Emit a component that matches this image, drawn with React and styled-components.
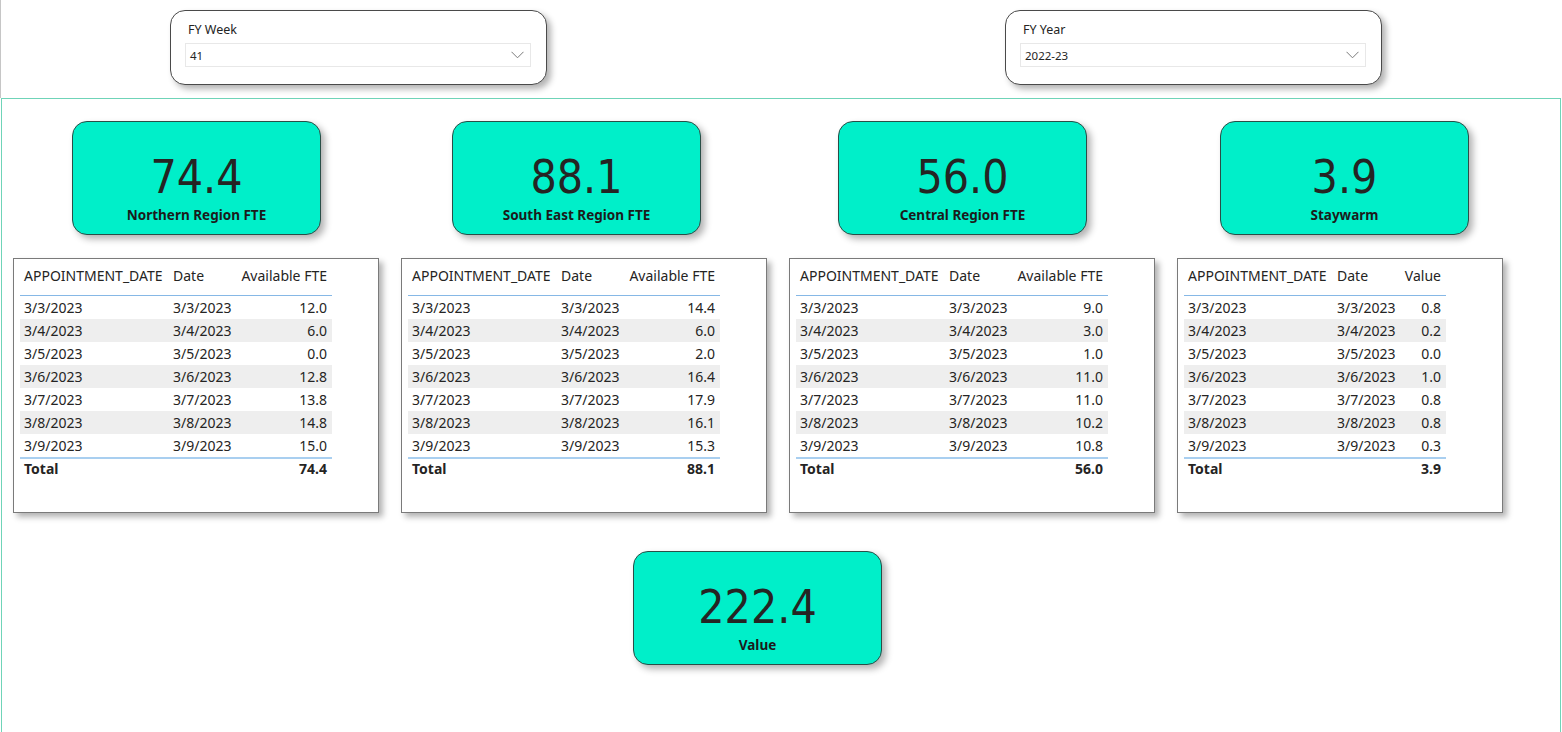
import styled, { createGlobalStyle } from 'styled-components';

const GlobalStyle = createGlobalStyle`
  html, body { margin: 0; padding: 0; background: #ffffff; }
  body { font-family: 'Noto Sans', 'Open Sans', sans-serif; color: #252423; }
`;

const regions = [
  {
    value: '74.4',
    label: 'Northern Region FTE',
    measure: 'Available FTE',
    rows: ['12.0', '6.0', '0.0', '12.8', '13.8', '14.8', '15.0'],
    offset: 0,
  },
  {
    value: '88.1',
    label: 'South East Region FTE',
    measure: 'Available FTE',
    rows: ['14.4', '6.0', '2.0', '16.4', '17.9', '16.1', '15.3'],
    offset: 131,
  },
  {
    value: '56.0',
    label: 'Central Region FTE',
    measure: 'Available FTE',
    rows: ['9.0', '3.0', '1.0', '11.0', '11.0', '10.2', '10.8'],
    offset: 137,
  },
  {
    value: '3.9',
    label: 'Staywarm',
    measure: 'Value',
    rows: ['0.8', '0.2', '0.0', '1.0', '0.8', '0.8', '0.3'],
    offset: 133,
    narrow: true,
  },
];

const dates = ['3/3/2023', '3/4/2023', '3/5/2023', '3/6/2023', '3/7/2023', '3/8/2023', '3/9/2023'];

const Page = styled.div`
  width: 1562px;
  height: 732px;
  overflow: hidden;
  display: flex;
  flex-direction: column;
`;

const TopBar = styled.div`
  height: 98px;
  flex: none;
  box-sizing: border-box;
  border-left: 1px solid #c6c6c6;
  display: flex;
  align-items: flex-start;
  padding: 10px 0 0 169px;
  gap: 458px;
`;

const Slicer = styled.div`
  width: 377px;
  height: 75px;
  box-sizing: border-box;
  border: 1px solid #4a4a4a;
  border-radius: 15px;
  background: #fff;
  box-shadow: 4px 4px 6px rgba(0, 0, 0, 0.3);
  padding: 10px 15px 0 14px;
`;

const SlicerTitle = styled.div`
  font-size: 12.5px;
  line-height: 18px;
  color: #252423;
  padding-left: 3px;
`;

const SlicerBox = styled.div`
  margin-top: 4px;
  height: 24px;
  box-sizing: border-box;
  border: 1px solid #e8e8e8;
  display: flex;
  align-items: center;
  justify-content: space-between;
  padding: 0 6px 0 4px;
  font-size: 11.5px;
  color: #252423;
`;

const Panel = styled.div`
  flex: none;
  height: 660px;
  margin-left: 1px;
  width: 1560px;
  box-sizing: border-box;
  border: 1px solid #6fd4b8;
  padding: 22px 0 0 0;
  display: flex;
  flex-direction: column;
`;

const CardRow = styled.div`
  display: flex;
  padding-left: 70px;
`;

const Card = styled.div`
  width: 249px;
  height: 114px;
  flex: none;
  box-sizing: border-box;
  background: #00efc9;
  border: 1px solid #2a4e47;
  border-radius: 15px;
  box-shadow: 4px 4px 7px rgba(0, 0, 0, 0.3);
  display: flex;
  flex-direction: column;
  align-items: center;
  padding-top: 32px;
  margin-left: ${(p) => p.$offset || 0}px;
`;

const CardValue = styled.div`
  font-family: 'DejaVu Sans Condensed', 'DejaVu Sans', sans-serif;
  font-stretch: condensed;
  font-size: 46px;
  line-height: 46px;
  color: #252423;
`;

const CardLabel = styled.div`
  margin-top: 6px;
  font-size: 13.5px;
  font-weight: 700;
  line-height: 18px;
  color: #1b1b1b;
`;

const TableRow = styled.div`
  display: flex;
  gap: 22px;
  padding-left: 11px;
  margin-top: 23px;
`;

const TableBox = styled.div`
  width: ${(p) => (p.$narrow ? 326 : 366)}px;
  height: 255px;
  flex: none;
  box-sizing: border-box;
  border: 1px solid #7a7a7a;
  background: #fff;
  box-shadow: 4px 4px 6px rgba(0, 0, 0, 0.3);
  padding: 5px 0 0 6px;
`;

const Grid = styled.table`
  border-collapse: collapse;
  font-size: 14px;
  color: #252423;
  white-space: nowrap;
`;

const Head = styled.th`
  font-weight: 400;
  text-align: ${(p) => (p.$right ? 'right' : 'left')};
  padding: 2px ${(p) => (p.$right ? 5 : 4)}px 9px 4px;
  line-height: 20px;
  border-bottom: 1px solid #86b8e6;
  width: ${(p) => p.$w}px;
  box-sizing: border-box;
`;

const Row = styled.tr`
  background: ${(p) => (p.$striped ? '#eeeeee' : '#ffffff')};
`;

const Cell = styled.td`
  height: 23px;
  padding: 0 ${(p) => (p.$right ? 5 : 4)}px 0 4px;
  line-height: 23px;
  text-align: ${(p) => (p.$right ? 'right' : 'left')};
`;

const TotalCell = styled.td`
  border-top: 2px solid #a9cff0;
  font-weight: 700;
  line-height: 20px;
  padding: 0 ${(p) => (p.$right ? 5 : 4)}px 0 4px;
  text-align: ${(p) => (p.$right ? 'right' : 'left')};
`;

const BottomRow = styled.div`
  display: flex;
  padding-left: 631px;
  margin-top: 38px;
`;

const Chevron = () => (
  <svg width="13" height="8" viewBox="0 0 13 8">
    <polyline points="0.5,0.8 6.5,6.8 12.5,0.8" fill="none" stroke="#7a7a7a" strokeWidth="1" />
  </svg>
);

const RegionTable = ({ region }) => (
  <TableBox $narrow={region.narrow}>
    <Grid>
      <thead>
        <tr>
          <Head $w={149}>APPOINTMENT_DATE</Head>
          <Head $w={67}>Date</Head>
          <Head $w={region.narrow ? 46 : 96} $right>
            {region.measure}
          </Head>
        </tr>
      </thead>
      <tbody>
        {region.rows.map((v, i) => (
          <Row key={dates[i]} $striped={i % 2 === 1}>
            <Cell>{dates[i]}</Cell>
            <Cell>{dates[i]}</Cell>
            <Cell $right>{v}</Cell>
          </Row>
        ))}
        <tr>
          <TotalCell>Total</TotalCell>
          <TotalCell></TotalCell>
          <TotalCell $right>{region.value}</TotalCell>
        </tr>
      </tbody>
    </Grid>
  </TableBox>
);

const App = () => {
  return (
    <Page>
      <GlobalStyle />
      <TopBar>
        <Slicer>
          <SlicerTitle>FY Week</SlicerTitle>
          <SlicerBox>
            <span>41</span>
            <Chevron />
          </SlicerBox>
        </Slicer>
        <Slicer>
          <SlicerTitle>FY Year</SlicerTitle>
          <SlicerBox>
            <span>2022-23</span>
            <Chevron />
          </SlicerBox>
        </Slicer>
      </TopBar>
      <Panel>
        <CardRow>
          {regions.map((r) => (
            <Card key={r.label} $offset={r.offset}>
              <CardValue>{r.value}</CardValue>
              <CardLabel>{r.label}</CardLabel>
            </Card>
          ))}
        </CardRow>
        <TableRow>
          {regions.map((r) => (
            <RegionTable key={r.label} region={r} />
          ))}
        </TableRow>
        <BottomRow>
          <Card>
            <CardValue>222.4</CardValue>
            <CardLabel>Value</CardLabel>
          </Card>
        </BottomRow>
      </Panel>
    </Page>
  );
};

export default App;
